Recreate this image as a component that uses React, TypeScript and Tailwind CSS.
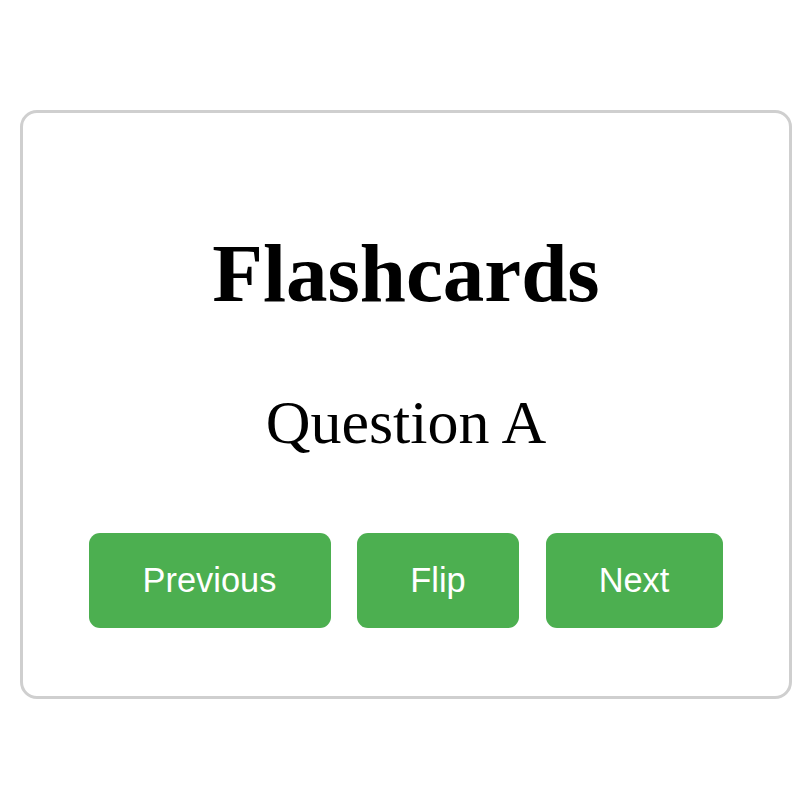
export default function App() {
  return (
    <div className="w-[802px] h-[802px] bg-white pt-[110px] pl-[20px]">
      <div className="w-[772px] h-[589px] border-[3px] border-[#cfcfcf] rounded-[17px] flex flex-col items-center pt-[119px]">
        <h1
          className="text-[83px] leading-none font-bold text-black m-0"
          style={{ fontFamily: '"Liberation Serif", "Times New Roman", serif' }}
        >
          Flashcards
        </h1>
        <p
          className="text-[62px] leading-none text-black mt-[76px]"
          style={{ fontFamily: '"Liberation Serif", "Times New Roman", serif' }}
        >
          Question A
        </p>
        <div
          className="flex gap-[26.5px] mt-[80px] mr-[1px]"
          style={{ fontFamily: '"Liberation Sans", Arial, sans-serif' }}
        >
          <button className="h-[95px] w-[242px] bg-[#4caf50] text-white text-[34.4px] rounded-[11px] flex items-center justify-center">
            Previous
          </button>
          <button className="h-[95px] w-[162px] bg-[#4caf50] text-white text-[34.4px] rounded-[11px] flex items-center justify-center">
            Flip
          </button>
          <button className="h-[95px] w-[177px] bg-[#4caf50] text-white text-[34.4px] rounded-[11px] flex items-center justify-center">
            Next
          </button>
        </div>
      </div>
    </div>
  );
}
